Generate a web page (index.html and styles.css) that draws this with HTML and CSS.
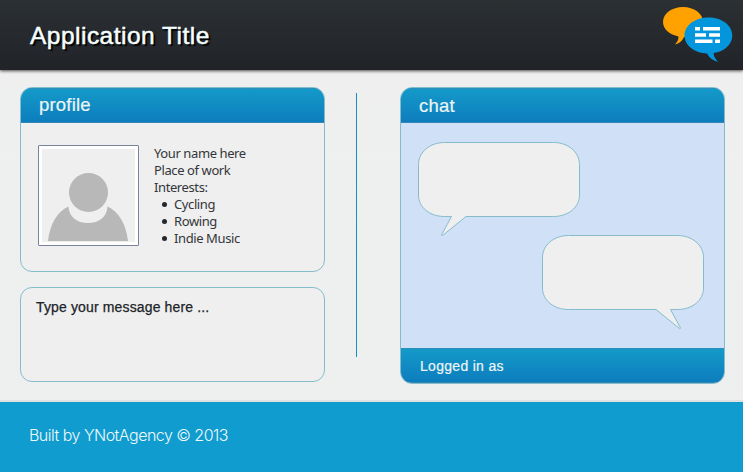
FILE: index.html
```html
<!DOCTYPE html>
<html lang="en">
<head>
<meta charset="utf-8">
<title>Application Title</title>
<link rel="stylesheet" href="styles.css">
</head>
<body>
<header class="header">
  <h1 class="title">Application Title</h1>
  <svg class="logo" width="72" height="58" viewBox="661 5 72 58">
    <path fill="#ffa200" d="M683 7C672 7 663 13.500 663 22C663 29 669.500 34.500 678.500 36.500C678.500 39.500 677.500 42 675 44.500C680 43 682.500 40.500 684 37C694 37 703 31 703 22C703 13.500 694 7 683 7Z"/>
    <path fill="#0496dc" d="M708.500 17.500C721.500 17.500 732.300 25 732.300 35.500C732.300 44.500 724.500 51.500 713.500 53C713.800 56.500 715.500 59 718 62C712.500 60.500 709 57.500 707 53.500C694.500 53 684.500 45.500 684.500 35.500C684.500 25 695.500 17.500 708.500 17.500Z"/>
    <path fill="#fff" d="M695 27h5v3.500h-5zM703 27h17v3.500h-17zM695 33.200h11v3.500h-11zM709 33.200h11v3.500h-11zM695 39.500h17.500v3.500h-17.500zM715 39.500h5v3.500h-5z"/>
  </svg>
</header>
<main class="main">
  <div class="left">
    <section class="panel profile">
      <h2 class="bar"><span class="bar-text profile-heading">profile</span></h2>
      <div class="profile-body">
        <div class="avatar">
          <svg width="93" height="93" viewBox="42 149 93 93">
            <circle cx="88.500" cy="192.500" r="19.500" fill="#b8b8b8"/>
            <path fill="#b8b8b8" d="M68.500 206.500C69 217 77 223 88 223C99 223 107 217 107.500 206.500C119 212 126 224 128 241H48C50 224 57 212 68.500 206.500Z"/>
          </svg>
        </div>
        <div class="details">
          <p>Your name here</p>
          <p>Place of work</p>
          <p>Interests:</p>
          <ul>
            <li>Cycling</li>
            <li>Rowing</li>
            <li>Indie Music</li>
          </ul>
        </div>
      </div>
    </section>
    <section class="panel message"><span class="message-text">Type your message here ...</span></section>
  </div>
  <div class="divider"></div>
  <section class="panel chat">
    <h2 class="bar"><span class="bar-text chat-heading">chat</span></h2>
    <div class="chat-body">
      <svg class="bubble" width="163" height="96" viewBox="418 142 163 96">
        <path d="M444.500 142.500H553.500C568 142.500 579.500 152 579.500 164.500V195C579.500 207.500 568 216.500 553.500 216.500H466L442.500 235.500Q441 236 442 234L451.500 216.500H444.500C430 216.500 418.500 207.500 418.500 195V164.500C418.500 152 430 142.500 444.500 142.500Z"/>
      </svg>
      <svg class="bubble reply" width="163" height="96" viewBox="542 235 163 96">
        <path d="M568.500 235.500H677.500C692 235.500 703.500 245 703.500 257.500V288C703.500 300.500 692 309.500 677.500 309.500H670.500L680 327Q681 329 679.500 328.500L656 309.500H568.500C554 309.500 542.500 300.500 542.500 288V257.500C542.500 245 554 235.500 568.500 235.500Z"/>
      </svg>
    </div>
    <div class="bar status"><span class="status-text">Logged in as</span></div>
  </section>
</main>
<footer class="footer"><span class="footer-text">Built by YNotAgency © 2013</span></footer>
</body>
</html>
```
FILE: styles.css
```css
* { box-sizing: border-box; }
body {
  margin: 0;
  height: 472px;
  display: flex;
  flex-direction: column;
  overflow: hidden;
  background: linear-gradient(#efefef, #edf0ef);
  font-family: "Liberation Sans", Arial, sans-serif;
}
h1, h2, p, ul { margin: 0; padding: 0; font-weight: 400; }
svg { display: block; }
.header {
  height: 70px;
  flex: none;
  display: flex;
  justify-content: space-between;
  align-items: flex-start;
  padding: 5px 10px 0 30px;
  background: linear-gradient(#2b3033, #212328);
  box-shadow: 0 1px 3px rgba(50, 40, 40, .85);
}
.title {
  margin-top: 17px;
  font-size: 24.5px;
  line-height: 28px;
  letter-spacing: .48px;
  color: #f5ffff;
  -webkit-text-stroke: .5px #f5ffff;
  text-shadow: 2px 2px 1px #000;
}
.main {
  height: 332px;
  flex: none;
  display: flex;
  align-items: flex-start;
  padding: 17px 18px 0 20px;
}
.left { width: 305px; }
.panel {
  border: 1px solid #85bccb;
  border-radius: 12px;
  background: #efefef;
  overflow: hidden;
}
.bar {
  height: 35px;
  padding-left: 18px;
  background: linear-gradient(#149bc9, #0d7dbd);
  border-bottom: 1px solid #3585b5;
  box-shadow: inset 0 1px #2e8dbd;
  color: #eef5f8;
  font-size: 18.5px;
  line-height: 33px;
  letter-spacing: .2px;
  -webkit-text-stroke: .2px #eef5f8;
}
.chat-heading { line-height: 35px; }
.profile { height: 185px; }
.profile-body { display: flex; padding: 22px 17px; gap: 15px; }
.avatar {
  width: 101px;
  height: 101px;
  flex: none;
  border: 1px solid #78839c;
  border-radius: 1px;
  padding: 3px;
  background: #efefef;
  box-shadow: inset 0 0 0 3px #fff;
}
.details {
  color: #33363a;
  font: 13px/17px "Noto Sans", sans-serif;
  letter-spacing: -.4px;
}
.details ul { list-style: none; }
.details li { display: flex; align-items: center; padding-left: 8px; gap: 7px; }
.details li::before {
  content: "";
  width: 5px;
  height: 5px;
  border-radius: 50%;
  background: #25282d;
}
.message {
  height: 95px;
  margin-top: 15px;
  padding: 10px 15px;
  color: #202328;
  font-size: 14px;
  line-height: 18px;
  letter-spacing: .14px;
  -webkit-text-stroke: .25px #202328;
}
.divider {
  width: 1px;
  height: 264px;
  margin: 6px 43px 0 31px;
  background: #128fc5;
}
.chat { width: 325px; height: 297px; }
.chat-body {
  height: 225px;
  padding: 19px 17px;
  background: #d0e0f7;
}
.bubble { fill: #efefef; stroke: #85bccb; }
.reply { margin: -3px 0 0 124px; }
.status {
  font-size: 14px;
  padding-left: 19px;
  line-height: 36px;
  letter-spacing: .3px;
  border-bottom: 1px solid #3585b5;
}
.footer {
  flex: 1;
  padding: 23px 29px;
  background: #109cce;
  box-shadow: 0 -2px #dfe1e2;
  color: #edf9fd;
  font: 300 16px/20px Inter, Roboto, sans-serif;
  letter-spacing: -.52px;
}
```
